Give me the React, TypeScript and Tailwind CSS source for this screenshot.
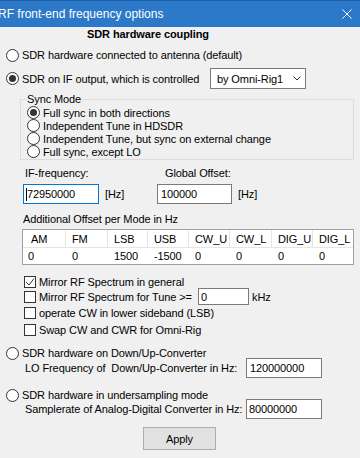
import React from 'react';

function Radio({ checked = false }: { checked?: boolean }) {
  return (
    <span className="relative flex h-[13px] w-[13px] shrink-0 items-center justify-center rounded-full border border-[#333333] bg-white">
      {checked && <span className="h-[7px] w-[7px] rounded-full bg-[#333333]" />}
    </span>
  );
}

function Check({ checked = false }: { checked?: boolean }) {
  return (
    <span className="flex h-[12px] w-[12px] shrink-0 items-center justify-center border border-[#333333] bg-white">
      {checked && (
        <svg width="10" height="10" viewBox="0 0 10 10">
          <path d="M1 5 L4 8 L9 1.5" fill="none" stroke="#333333" strokeWidth="1" />
        </svg>
      )}
    </span>
  );
}

const modes = [
  { name: 'AM', value: '0', w: 'w-[43px]' },
  { name: 'FM', value: '0', w: 'w-[42px]' },
  { name: 'LSB', value: '1500', w: 'w-[40px]' },
  { name: 'USB', value: '-1500', w: 'w-[41px]' },
  { name: 'CW_U', value: '0', w: 'w-[41px]' },
  { name: 'CW_L', value: '0', w: 'w-[42px]' },
  { name: 'DIG_U', value: '0', w: 'w-[41px]' },
  { name: 'DIG_L', value: '0', w: 'w-[40px]' },
];

const syncModes = [
  'Full sync in both directions',
  'Independent Tune in HDSDR',
  'Independent Tune, but sync on external change',
  'Full sync, except LO',
];

export default function App() {
  return (
    <div className="relative h-[458px] w-[360px] overflow-hidden whitespace-nowrap bg-[#f0f0f0] font-['Liberation_Sans',Arial,sans-serif] text-[11px] leading-[14px] tracking-[-0.1px] text-black">
      {/* title bar */}
      <div className="flex h-[27px] items-center justify-between border-t border-[#1f5fa8] bg-[#2b79c8] text-white">
        <span className="-ml-[2px] text-[12px] tracking-normal">RF front-end frequency options</span>
        <svg className="mr-[8px]" width="10" height="10" viewBox="0 0 10 10">
          <path d="M0.5 0.5 L9.5 9.5 M9.5 0.5 L0.5 9.5" stroke="white" strokeWidth="1" />
        </svg>
      </div>

      <div className="flex h-[13px] items-center pl-[87px] font-bold">SDR hardware coupling</div>

      <div className="mt-[8px] flex h-[14px] items-center gap-[3px] pl-[6px]">
        <Radio />
        <span>SDR hardware connected to antenna (default)</span>
      </div>

      <div className="mt-[6px] flex h-[21px] items-center pl-[6px]">
        <Radio checked />
        <span className="ml-[3px] w-[188px]">SDR on IF output, which is controlled</span>
        <div className="flex h-[21px] w-[96px] items-center justify-between border border-[#7a7a7a] bg-white pl-[6px] pr-[4px]">
          <span>by Omni-Rig1</span>
          <svg width="8" height="5" viewBox="0 0 8 5">
            <path d="M0.5 0.5 L4 4 L7.5 0.5" fill="none" stroke="#333" strokeWidth="1" />
          </svg>
        </div>
      </div>

      <fieldset className="ml-[20px] mt-[3px] w-[334px] border border-[#dcdcdc] pl-[6px] pb-[1px]">
        <legend className="h-[14px] leading-[14px]">Sync Mode</legend>
        {syncModes.map((m, i) => (
          <div key={m} className="flex h-[13px] items-center gap-[3px]">
            <Radio checked={i === 0} />
            <span>{m}</span>
          </div>
        ))}
      </fieldset>

      <div className="mt-[6px] flex h-[14px] items-center">
        <span className="ml-[25px] w-[140px]">IF-frequency:</span>
        <span>Global Offset:</span>
      </div>

      <div className="mt-[4px] flex h-[20px] items-center">
        <div className="ml-[23px] flex h-[20px] w-[76px] items-center border border-[#0078d7] bg-white pl-[2px]">
          <span className="h-[13px] w-px bg-black" />
          <span>72950000</span>
        </div>
        <span className="ml-[6px] w-[52px]">[Hz]</span>
        <div className="flex h-[20px] w-[75px] items-center border border-[#7a7a7a] bg-white pl-[3px]">100000</div>
        <span className="ml-[6px]">[Hz]</span>
      </div>

      <div className="mt-[8px] flex h-[14px] items-center pl-[23px]">Additional Offset per Mode in Hz</div>

      <div className="ml-[22px] mt-[3px] flex w-[332px] border border-[#a0a0a0] bg-white">
        {modes.map((m, i) => (
          <div key={m.name} className={`${m.w} flex flex-col`}>
            <div
              className={`flex h-[18px] items-center border-b border-[#e5e5e5] ${i === 0 ? 'pl-[8px]' : 'pl-[6px]'} ${
                i < modes.length - 1 ? 'border-r' : ''
              }`}
            >
              {m.name}
            </div>
            <div className={`flex h-[16px] items-center ${i === 0 ? 'pl-[5px]' : 'pl-[6px]'}`}>{m.value}</div>
          </div>
        ))}
      </div>

      <div className="mt-[10px] flex h-[13px] items-center gap-[3px] pl-[24px]">
        <Check checked />
        <span>Mirror RF Spectrum in general</span>
      </div>
      <div className="flex h-[17px] items-center pl-[24px]">
        <Check />
        <span className="ml-[3px] w-[159px]">Mirror RF Spectrum for Tune &gt;=</span>
        <div className="flex h-[17px] w-[51px] items-center border border-[#7a7a7a] bg-white pl-[2px]">0</div>
        <span className="ml-[3px]">kHz</span>
      </div>
      <div className="flex h-[16px] items-center gap-[3px] pl-[24px]">
        <Check />
        <span>operate CW in lower sideband (LSB)</span>
      </div>
      <div className="mt-[1px] flex h-[16px] items-center gap-[3px] pl-[24px]">
        <Check />
        <span>Swap CW and CWR for Omni-Rig</span>
      </div>

      <div className="mt-[8px] flex h-[14px] items-center gap-[3px] pl-[6px]">
        <Radio />
        <span>SDR hardware on Down/Up-Converter</span>
      </div>
      <div className="-mt-[2px] flex h-[20px] items-center pl-[25px]">
        <span className="w-[221px]">LO Frequency of&nbsp; Down/Up-Converter in Hz:</span>
        <div className="flex h-[20px] w-[76px] items-center border border-[#7a7a7a] bg-white pl-[3px]">120000000</div>
      </div>

      <div className="mt-[10px] flex h-[14px] items-center gap-[3px] pl-[6px]">
        <Radio />
        <span>SDR hardware in undersampling mode</span>
      </div>
      <div className="-mt-[3px] flex h-[20px] items-center pl-[25px]">
        <span className="w-[221px]">Samplerate of Analog-Digital Converter in Hz:</span>
        <div className="flex h-[20px] w-[76px] items-center border border-[#7a7a7a] bg-white pl-[2px]">80000000</div>
      </div>

      <div className="ml-[143px] mt-[8px] flex h-[23px] w-[73px] items-center justify-center border border-[#adadad] bg-[#e1e1e1]">
        Apply
      </div>
    </div>
  );
}
